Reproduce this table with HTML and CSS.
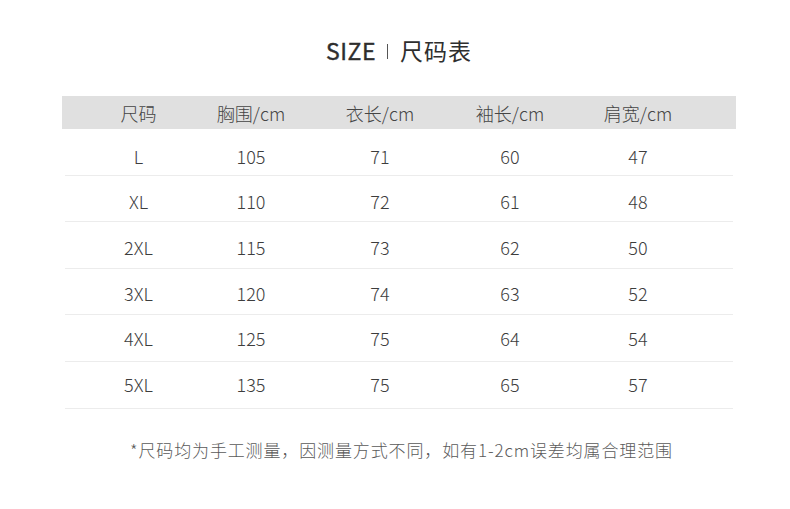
FILE: index.html
```html
<!DOCTYPE html>
<html lang="zh">
<head>
<meta charset="utf-8">
<link rel="stylesheet" href="styles.css">
</head>
<body>
<div class="page">
  <h1 class="title"><span class="en">SIZE</span><span class="sep"></span><span class="cn">尺码表</span></h1>
  <div class="table">
    <div class="row head">
      <div>尺码</div><div>胸围/cm</div><div>衣长/cm</div><div>袖长/cm</div><div>肩宽/cm</div>
    </div>
    <div class="row"><div>L</div><div>105</div><div>71</div><div>60</div><div>47</div></div>
    <div class="row"><div>XL</div><div>110</div><div>72</div><div>61</div><div>48</div></div>
    <div class="row"><div>2XL</div><div>115</div><div>73</div><div>62</div><div>50</div></div>
    <div class="row"><div>3XL</div><div>120</div><div>74</div><div>63</div><div>52</div></div>
    <div class="row"><div>4XL</div><div>125</div><div>75</div><div>64</div><div>54</div></div>
    <div class="row"><div>5XL</div><div>135</div><div>75</div><div>65</div><div>57</div></div>
  </div>
  <p class="note">*尺码均为手工测量，因测量方式不同，如有1-2cm误差均属合理范围</p>
</div>
</body>
</html>
```
FILE: styles.css
```css
* { box-sizing: border-box; }
html, body { margin: 0; padding: 0; background: #fff; }
body {
  font-family: "Noto Sans CJK SC", "Noto Sans", sans-serif;
  color: #3a3a3a;
  width: 790px;
  height: 509px;
  overflow: hidden;
}
.page {
  padding: 33px 54px 0 62px;
}
.title {
  margin: 0 0 29px 0;
  height: 34px;
  display: flex;
  align-items: center;
  justify-content: center;
  font-weight: 400;
  color: #2e2e2e;
}
.title .en {
  font-size: 23px;
  font-weight: 400;
  letter-spacing: 0.5px;
  -webkit-text-stroke: 0.4px #2e2e2e;
}
.title .sep {
  width: 1px;
  height: 15px;
  background: #555;
  margin: 2px 12px 0 11px;
}
.title .cn {
  font-size: 23px;
  font-weight: 400;
  letter-spacing: 1px;
}
.table {
  width: 674px;
}
.row {
  display: grid;
  grid-template-columns: 113px 112px 146px 114px 142px;
  padding-left: 17px;
  height: 46.6px;
  align-items: center;
  font-size: 18px;
  font-weight: 300;
  color: #3d3d3d;
  margin: 0 3px;
  border-bottom: 1px solid #ececec;
  padding-top: 8px;
}
.row:nth-child(3) { padding-top: 6px; }
.row:nth-child(4) { padding-top: 4px; }
.row:nth-child(5) { padding-top: 2px; }
.row:nth-child(6) { padding-top: 0; }
.row:nth-child(7) { padding-top: 0; padding-bottom: 2px; }
.row > div { text-align: center; }
.row.head {
  height: 33px;
  margin: 0;
  padding-top: 0;
  padding-left: 20px;
  background: #e0e0e0;
  border-bottom: none;
  color: #444;
}
.note {
  margin: 28px 0 0 0;
  font-size: 17px;
  font-weight: 300;
  letter-spacing: 0.87px;
  color: #5a5a5a;
  padding-left: 68px;
}
```
